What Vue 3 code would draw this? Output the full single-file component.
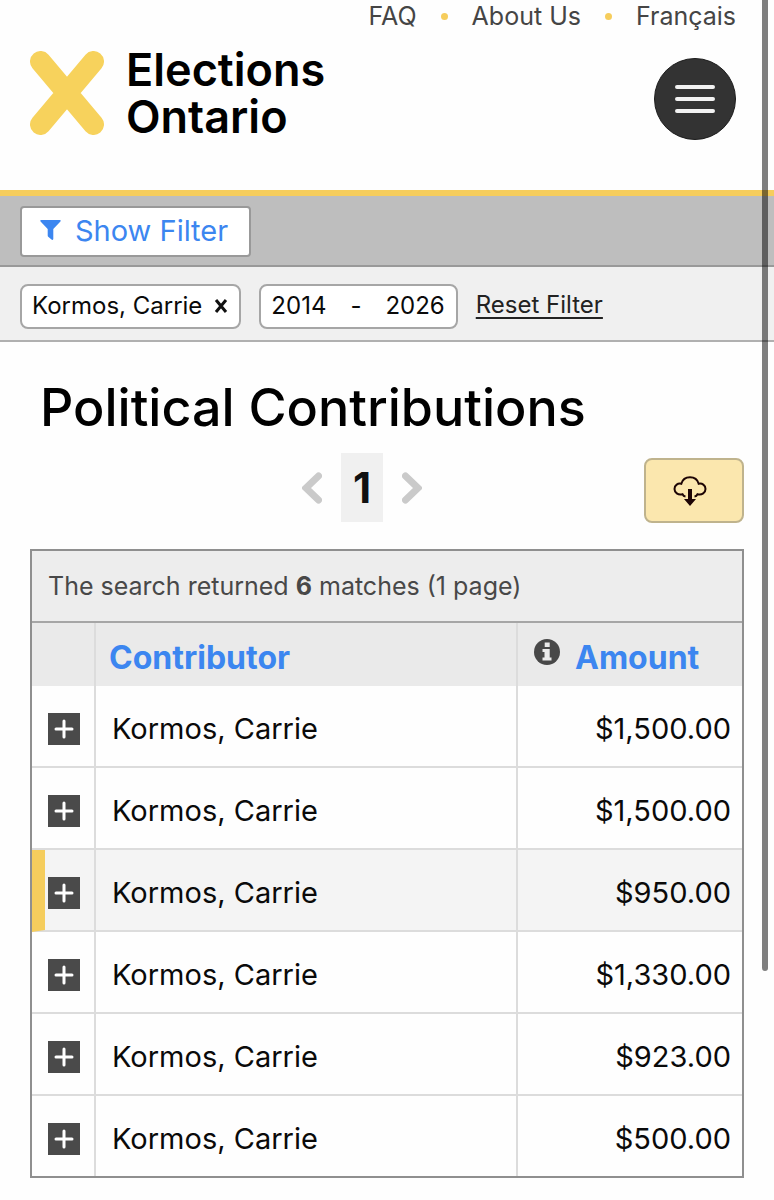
<script setup>
const contributions = [
  { id: 1, name: 'Kormos, Carrie', amount: '$1,500.00', active: false },
  { id: 2, name: 'Kormos, Carrie', amount: '$1,500.00', active: false },
  { id: 3, name: 'Kormos, Carrie', amount: '$950.00', active: true },
  { id: 4, name: 'Kormos, Carrie', amount: '$1,330.00', active: false },
  { id: 5, name: 'Kormos, Carrie', amount: '$923.00', active: false },
  { id: 6, name: 'Kormos, Carrie', amount: '$500.00', active: false }
]
</script>

<template>
  <div class="page">
    <header class="header">
      <nav class="top-links">
        <a href="#">FAQ</a>
        <span class="dot"></span>
        <a href="#">About Us</a>
        <span class="dot"></span>
        <a href="#">Français</a>
      </nav>
      <div class="brand-row">
        <a class="brand" href="#">
          <svg class="brand-mark" viewBox="0 0 74 84" aria-hidden="true">
            <path d="M10.500 10.500L63.500 73.500M63.500 10.500L10.500 73.500" />
          </svg>
          <span class="brand-name">
            <span>Elections</span>
            <span>Ontario</span>
          </span>
        </a>
        <button class="menu-button" type="button" aria-label="Menu">
          <svg viewBox="0 0 40 28" aria-hidden="true">
            <path d="M2 2H38M2 14H38M2 26H38" />
          </svg>
        </button>
      </div>
    </header>

    <div class="filter-bar">
      <button class="filter-button" type="button">
        <svg viewBox="0 0 21 20" aria-hidden="true">
          <path d="M1 0H20Q21.300 .5 20.200 1.800L13.300 9V19Q12.800 20.400 11.500 19.600L8.200 16.700Q7.700 16.200 7.700 15.500V9L.8 1.800Q-.3 .5 1 0Z" />
        </svg>
        Show Filter
      </button>
    </div>

    <div class="active-filters">
      <span class="chip">
        Kormos, Carrie
        <button class="chip-remove" type="button" aria-label="Remove Kormos, Carrie">
          <svg viewBox="0 0 14 14" aria-hidden="true">
            <path d="M2 1L12 13M12 1L2 13" />
          </svg>
        </button>
      </span>
      <span class="chip chip-years"><span>2014</span><span>-</span><span>2026</span></span>
      <a class="reset" href="#">Reset Filter</a>
    </div>

    <main class="content">
      <h1>Political Contributions</h1>

      <div class="toolbar">
        <nav class="pager" aria-label="Pages">
          <button type="button" aria-label="Previous page">
            <svg viewBox="0 0 20 32" aria-hidden="true"><path d="M16.500 4L4 16L16.500 28" /></svg>
          </button>
          <button class="current" type="button" aria-current="page">1</button>
          <button type="button" aria-label="Next page">
            <svg viewBox="0 0 20 32" aria-hidden="true"><path d="M3.500 4L16 16L3.500 28" /></svg>
          </button>
        </nav>
        <button class="download" type="button" aria-label="Download">
          <svg viewBox="0 0 34 30" aria-hidden="true">
            <path class="cloud" d="M12.500 20.500Q10.500 20.200 9.500 18.200C5 19.500 1.500 16.500 1.500 13C1.500 9 5 7 8.300 7.800C9.500 3.500 13 1.300 17 1.300C21 1.300 24.500 3.500 25.700 7.800C29 7 32.500 9 32.500 13C32.500 16.500 29 19.500 24.500 18.200Q23.500 20.200 21.500 20.500" />
            <path class="arrow" d="M15 13H19V23H23L17 30L11 23H15Z" />
          </svg>
        </button>
      </div>

      <section class="results">
        <p class="summary">The search returned <strong>6</strong> matches (1 page)</p>
        <table>
          <thead>
            <tr>
              <th class="col-toggle" aria-label="Details"></th>
              <th class="col-name"><a href="#">Contributor</a></th>
              <th class="col-amount">
                <div class="amount-head">
                  <button class="info" type="button" aria-label="About amounts">
                    <svg viewBox="0 0 26 26" aria-hidden="true">
                      <circle cx="13" cy="13" r="13" />
                      <path d="M10.700 3.500H15.700V8H10.700ZM8.500 10H15.700V18.500H17.500V21.500H8.500V18.500H10.500V13H8.500Z" />
                    </svg>
                  </button>
                  <a href="#">Amount</a>
                </div>
              </th>
            </tr>
          </thead>
          <tbody>
            <tr v-for="row in contributions" :key="row.id" :class="{ active: row.active }">
              <td class="col-toggle">
                <button class="expand" type="button" aria-label="Show details">
                  <svg viewBox="0 0 32 32" aria-hidden="true"><path d="M16 8V24M8 16H24" /></svg>
                </button>
              </td>
              <td class="col-name">{{ row.name }}</td>
              <td class="col-amount">{{ row.amount }}</td>
            </tr>
          </tbody>
        </table>
      </section>
    </main>

    <div class="scroll-thumb"></div>
  </div>
</template>

<style>
body {
  margin: 0;
  background: #fefefe;
}
</style>

<style scoped>
.page {
  position: relative;
  font-family: Inter, "Liberation Sans", sans-serif;
  font-size: 24px;
  color: #0a0a0a;
}

.page * {
  box-sizing: border-box;
}

button {
  display: flex;
  align-items: center;
  justify-content: center;
  margin: 0;
  padding: 0;
  border: 0;
  background: none;
  color: inherit;
  font: inherit;
}

svg {
  display: block;
  fill: none;
}

.header {
  padding-bottom: 50px;
  border-bottom: 6px solid #f6cd5c;
}

.top-links {
  display: flex;
  align-items: center;
  justify-content: flex-end;
  gap: 24px;
  height: 32px;
  padding-right: 38px;
  font-size: 25px;
}

.top-links a {
  color: #454545;
  text-decoration: none;
}

.dot {
  width: 7px;
  height: 7px;
  border-radius: 50%;
  background: #f6cd5c;
}

.brand-row {
  display: flex;
  align-items: center;
  justify-content: space-between;
  padding: 14px 38px 0 30px;
}

.brand {
  display: flex;
  align-items: center;
  gap: 22px;
  color: #000;
  text-decoration: none;
}

.brand-mark {
  width: 74px;
  height: 84px;
  stroke: #f7d25c;
  stroke-width: 21px;
  stroke-linecap: round;
}

.brand-name {
  font-size: 45px;
  font-weight: 600;
  line-height: 47px;
}

.brand-name span {
  display: block;
}

.menu-button {
  width: 82px;
  height: 82px;
  margin-top: 12px;
  border: 1px solid #1c1c1c;
  border-radius: 50%;
  background: #333;
}

.menu-button svg {
  width: 40px;
  stroke: #f2f2f2;
  stroke-width: 4px;
  stroke-linecap: round;
}

.filter-bar {
  padding: 10px 20px 8px;
  border-bottom: 2px solid #999;
  background: #bebebe;
}

.filter-button {
  gap: 14px;
  height: 51px;
  padding: 0 21px 3px 18px;
  border: 2px solid #999;
  border-radius: 4px;
  background: #fff;
  color: #3c86f0;
  font-size: 29px;
}

.filter-button svg {
  width: 21px;
  fill: currentColor;
}

.active-filters {
  display: flex;
  align-items: center;
  height: 75px;
  gap: 18px;
  padding: 6px 20px 0;
  border-bottom: 2px solid #b0b0b0;
  background: #f0f0f0;
}

.chip {
  display: flex;
  align-items: center;
  gap: 12px;
  height: 45px;
  padding: 0 11px 2px 10px;
  border: 2px solid #a6a6a6;
  border-radius: 8px;
  background: #fff;
  white-space: nowrap;
}

.chip-remove svg {
  width: 14px;
  stroke: #111;
  stroke-width: 3px;
}

.chip-years {
  gap: 24px;
}

.reset {
  padding-bottom: 5px;
  color: #222;
  white-space: nowrap;
  text-decoration-thickness: 2px;
  text-underline-offset: 4px;
}

.content {
  padding: 38px 30px 22px;
}

h1 {
  margin: 0;
  padding-left: 10px;
  color: #000;
  font-size: 52px;
  font-weight: 500;
  line-height: 56px;
}

.toolbar {
  display: flex;
  align-items: center;
  padding: 16px 0 26px;
}

.pager {
  display: flex;
  flex: 1;
  align-items: center;
  justify-content: center;
  gap: 19px;
  padding-left: 50px;
}

.pager svg {
  width: 20px;
  stroke: #cacaca;
  stroke-width: 7px;
  stroke-linecap: round;
}

.pager .current {
  width: 42px;
  height: 69px;
  background: #f0f0f0;
  color: #111;
  font-size: 42px;
  font-weight: 700;
}

.download {
  width: 100px;
  height: 65px;
  margin-top: 6px;
  padding-right: 8px;
  border: 2px solid #bfb38d;
  border-radius: 8px;
  background: #fbe7ae;
}

.download svg {
  width: 34px;
}

.cloud {
  stroke: #1d0505;
  stroke-width: 2px;
}

.arrow {
  fill: #1d0505;
}

.results {
  border: 2px solid #8f8f8f;
}

.summary {
  margin: 0;
  padding: 0 16px;
  border-bottom: 2px solid #a6a6a6;
  background: #ededed;
  color: #484848;
  font-size: 25px;
  line-height: 70px;
}

table {
  width: 100%;
  border-spacing: 0;
  table-layout: fixed;
}

th,
td {
  padding: 0;
  text-align: left;
}

th {
  height: 63px;
  background: #eaeaea;
  font-size: 32px;
  font-weight: 700;
}

th a {
  color: #3c86f0;
  text-decoration: none;
}

td {
  height: 82px;
  padding-top: 4px;
  border-bottom: 2px solid #dcdcdc;
  font-size: 29px;
}

tr:last-child td {
  height: 80px;
  border-bottom: 0;
}

.col-toggle {
  width: 64px;
  border-right: 2px solid #dcdcdc;
}

.col-name {
  border-right: 2px solid #dcdcdc;
}

th.col-name {
  padding: 6px 0 0 13px;
}

td.col-name {
  padding-left: 16px;
}

.col-amount {
  width: 224px;
}

td.col-amount {
  padding-right: 11px;
  text-align: right;
}

.amount-head {
  display: flex;
  align-items: center;
  gap: 15px;
  padding: 6px 0 0 16px;
}

.info {
  padding-bottom: 12px;
}

.info svg {
  width: 26px;
  fill: #484848;
}

.info path {
  fill: #eaeaea;
}

.expand {
  width: 32px;
  height: 32px;
  margin: 2px 0 0 16px;
  background: #4a4a4a;
}

.expand svg {
  width: 32px;
  stroke: #fff;
  stroke-width: 3px;
  stroke-linecap: round;
}

.active td {
  background: #f4f4f4;
}

.active .col-toggle {
  border-left: 13px solid #f5cd5d;
}

.active .expand {
  margin-left: 3px;
}

.scroll-thumb {
  position: absolute;
  top: 0;
  right: 6px;
  width: 6px;
  height: 971px;
  border-radius: 0 0 3px 3px;
  background: rgba(0, 0, 0, 0.5);
}
</style>
